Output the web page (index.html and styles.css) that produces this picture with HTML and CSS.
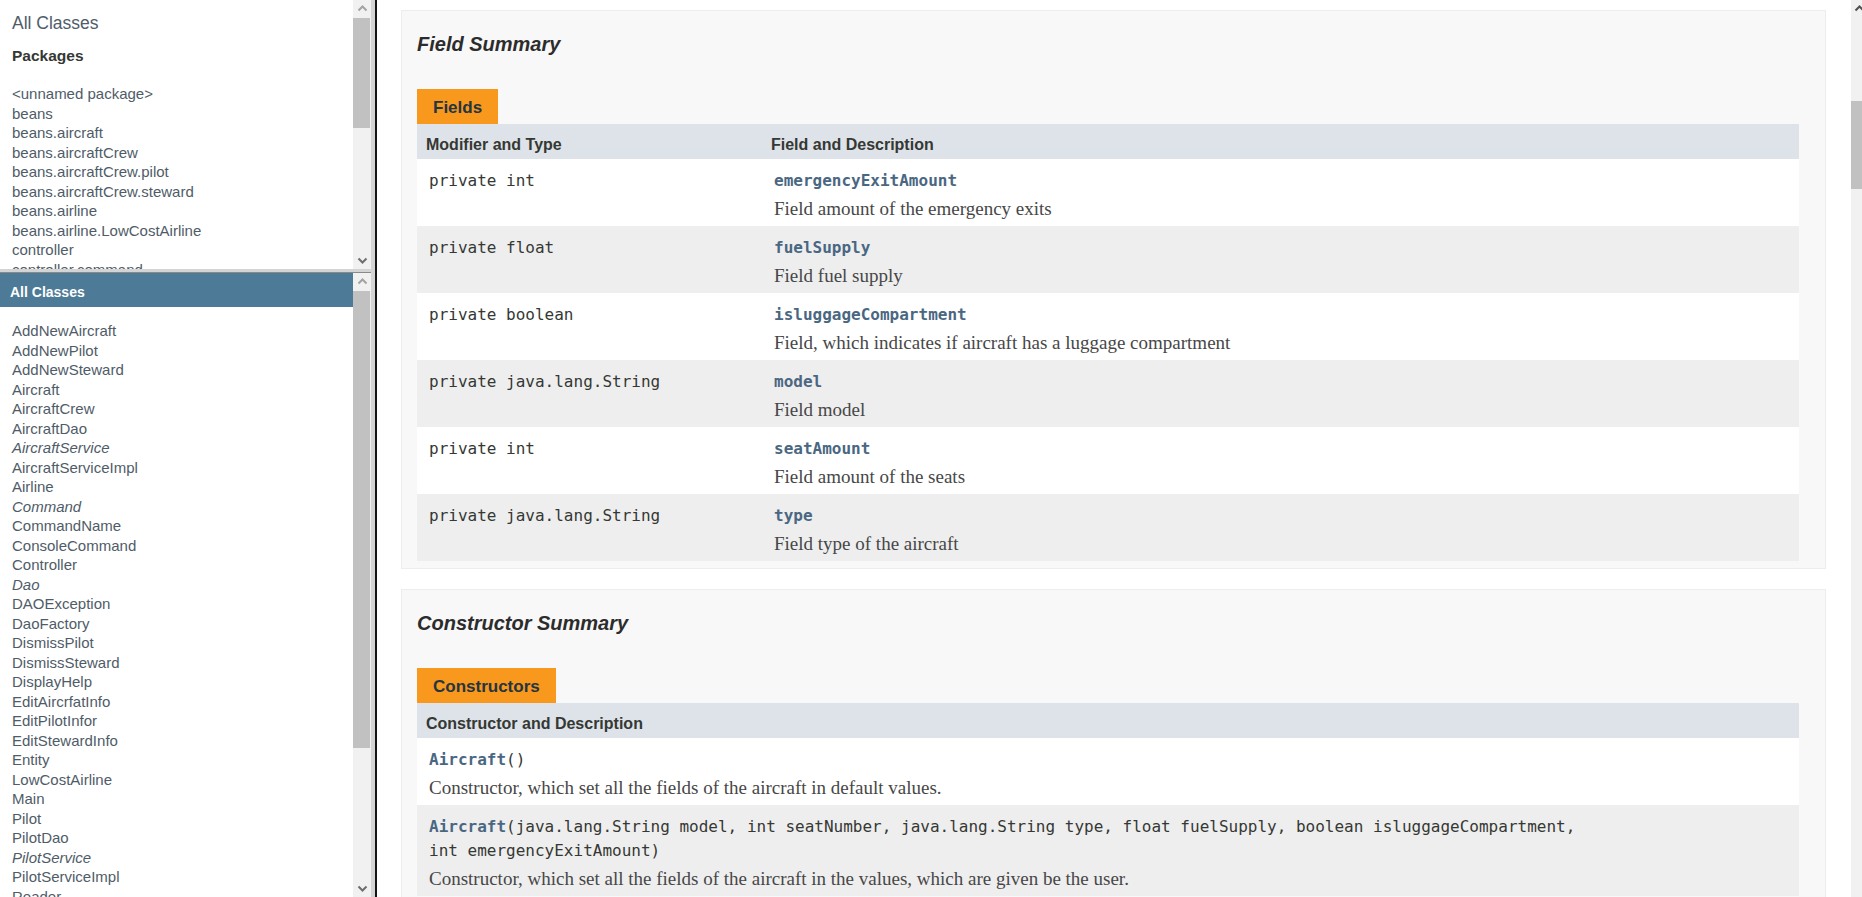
FILE: index.html
```html
<!DOCTYPE html>
<html>
<head>
<meta charset="utf-8">
<title>Aircraft</title>
<link rel="stylesheet" href="styles.css">
</head>
<body>
<div class="frameset">
  <div class="nav">
    <div class="pane pane-top">
      <div class="pane-body pkg-body">
        <div class="index-header"><a href="#">All Classes</a></div>
        <h2 class="pkg-title">Packages</h2>
        <ul class="index-list pkg-list">
          <li><a href="#">&lt;unnamed package&gt;</a></li>
          <li><a href="#">beans</a></li>
          <li><a href="#">beans.aircraft</a></li>
          <li><a href="#">beans.aircraftCrew</a></li>
          <li><a href="#">beans.aircraftCrew.pilot</a></li>
          <li><a href="#">beans.aircraftCrew.steward</a></li>
          <li><a href="#">beans.airline</a></li>
          <li><a href="#">beans.airline.LowCostAirline</a></li>
          <li><a href="#">controller</a></li>
          <li><a href="#">controller.command</a></li>
        </ul>
      </div>
      <div class="sb sb-top">
        <div class="sb-arrow"><svg width="17" height="17" viewBox="0 0 17 17"><polyline class="chev-off" points="4.5,10.5 8.5,6.5 12.5,10.5"/></svg></div>
        <div class="sb-track"><div class="sb-thumb"></div></div>
        <div class="sb-arrow"><svg width="17" height="17" viewBox="0 0 17 17"><polyline class="chev-on" points="4.5,6.5 8.5,10.5 12.5,6.5"/></svg></div>
      </div>
    </div>
    <div class="hdiv"></div>
    <div class="pane pane-bottom">
      <div class="pane-body">
        <h1 class="bar">All Classes</h1>
        <ul class="index-list class-list">
          <li><a href="#">AddNewAircraft</a></li>
          <li><a href="#">AddNewPilot</a></li>
          <li><a href="#">AddNewSteward</a></li>
          <li><a href="#">Aircraft</a></li>
          <li><a href="#">AircraftCrew</a></li>
          <li><a href="#">AircraftDao</a></li>
          <li><a href="#" class="iface">AircraftService</a></li>
          <li><a href="#">AircraftServiceImpl</a></li>
          <li><a href="#">Airline</a></li>
          <li><a href="#" class="iface">Command</a></li>
          <li><a href="#">CommandName</a></li>
          <li><a href="#">ConsoleCommand</a></li>
          <li><a href="#">Controller</a></li>
          <li><a href="#" class="iface">Dao</a></li>
          <li><a href="#">DAOException</a></li>
          <li><a href="#">DaoFactory</a></li>
          <li><a href="#">DismissPilot</a></li>
          <li><a href="#">DismissSteward</a></li>
          <li><a href="#">DisplayHelp</a></li>
          <li><a href="#">EditAircrfatInfo</a></li>
          <li><a href="#">EditPilotInfor</a></li>
          <li><a href="#">EditStewardInfo</a></li>
          <li><a href="#">Entity</a></li>
          <li><a href="#">LowCostAirline</a></li>
          <li><a href="#">Main</a></li>
          <li><a href="#">Pilot</a></li>
          <li><a href="#">PilotDao</a></li>
          <li><a href="#" class="iface">PilotService</a></li>
          <li><a href="#">PilotServiceImpl</a></li>
          <li><a href="#">Reader</a></li>
          <li><a href="#">Steward</a></li>
        </ul>
      </div>
      <div class="sb sb-bottom">
        <div class="sb-arrow"><svg width="17" height="17" viewBox="0 0 17 17"><polyline class="chev-off" points="4.5,10.5 8.5,6.5 12.5,10.5"/></svg></div>
        <div class="sb-track"><div class="sb-thumb"></div></div>
        <div class="sb-arrow"><svg width="17" height="17" viewBox="0 0 17 17"><polyline class="chev-on" points="4.5,6.5 8.5,10.5 12.5,6.5"/></svg></div>
      </div>
    </div>
  </div>
  <div class="vdiv"></div>
  <div class="main">
    <div class="content">
      <section class="summary">
        <h3 class="summary-title">Field Summary</h3>
        <div class="caption"><span>Fields</span></div>
        <table class="member-table">
          <tr>
            <th class="col-first">Modifier and Type</th>
            <th class="col-last">Field and Description</th>
          </tr>
          <tr class="row-white">
            <td class="col-first"><code class="line">private int</code></td>
            <td class="col-last"><code class="line"><a href="#" class="member">emergencyExitAmount</a></code><div class="block">Field amount of the emergency exits</div></td>
          </tr>
          <tr class="row-alt">
            <td class="col-first"><code class="line">private float</code></td>
            <td class="col-last"><code class="line"><a href="#" class="member">fuelSupply</a></code><div class="block">Field fuel supply</div></td>
          </tr>
          <tr class="row-white">
            <td class="col-first"><code class="line">private boolean</code></td>
            <td class="col-last"><code class="line"><a href="#" class="member">isluggageCompartment</a></code><div class="block">Field, which indicates if aircraft has a luggage compartment</div></td>
          </tr>
          <tr class="row-alt">
            <td class="col-first"><code class="line">private java.lang.String</code></td>
            <td class="col-last"><code class="line"><a href="#" class="member">model</a></code><div class="block">Field model</div></td>
          </tr>
          <tr class="row-white">
            <td class="col-first"><code class="line">private int</code></td>
            <td class="col-last"><code class="line"><a href="#" class="member">seatAmount</a></code><div class="block">Field amount of the seats</div></td>
          </tr>
          <tr class="row-alt">
            <td class="col-first"><code class="line">private java.lang.String</code></td>
            <td class="col-last"><code class="line"><a href="#" class="member">type</a></code><div class="block">Field type of the aircraft</div></td>
          </tr>
        </table>
      </section>
      <section class="summary">
        <h3 class="summary-title">Constructor Summary</h3>
        <div class="caption"><span>Constructors</span></div>
        <table class="member-table">
          <tr>
            <th class="col-one">Constructor and Description</th>
          </tr>
          <tr class="row-white">
            <td class="col-one"><code class="line"><a href="#" class="member">Aircraft</a>()</code><div class="block">Constructor, which set all the fields of the aircraft in default values.</div></td>
          </tr>
          <tr class="row-alt">
            <td class="col-one"><code class="line"><a href="#" class="member">Aircraft</a>(java.lang.String&nbsp;model, int&nbsp;seatNumber, java.lang.String&nbsp;type, float&nbsp;fuelSupply, boolean&nbsp;isluggageCompartment,<br>int&nbsp;emergencyExitAmount)</code><div class="block">Constructor, which set all the fields of the aircraft in the values, which are given be the user.</div></td>
          </tr>
        </table>
      </section>
    </div>
    <div class="sb sb-main">
      <div class="sb-arrow"><svg width="17" height="17" viewBox="0 0 17 17"><polyline class="chev-dark" points="4.5,10.5 8.5,6.5 12.5,10.5"/></svg></div>
      <div class="sb-track"><div class="sb-thumb"></div></div>
    </div>
  </div>
</div>
</body>
</html>
```

FILE: styles.css
```css
* { box-sizing: border-box; }

html, body {
  margin: 0;
  height: 100%;
}

body {
  overflow: hidden;
  background: #ffffff;
  color: #353833;
  font-family: "Liberation Sans", Arial, sans-serif;
}

a {
  color: #4a6782;
  text-decoration: none;
}

.frameset {
  display: flex;
  height: 897px;
}

/* ---------- navigation frames ---------- */
.nav {
  width: 371px;
  flex: none;
  display: flex;
  flex-direction: column;
}

.pane {
  display: flex;
  overflow: hidden;
}

.pane-top {
  height: 269px;
  flex: none;
}

.pane-bottom {
  flex: 1;
  min-height: 0;
}

.pane-body {
  flex: 1;
  min-width: 0;
  overflow: hidden;
  background: #ffffff;
}

.pkg-body {
  padding: 13px 0 0 12px;
}

.index-header {
  font-size: 17.5px;
  line-height: 20px;
}

.index-header a {
  color: #4f5d6b;
}

.pkg-title {
  margin: 14px 0 0;
  font-size: 15.5px;
  line-height: 18px;
  font-weight: bold;
  color: #353833;
}

.index-list {
  list-style: none;
  margin: 0;
  padding: 0;
  font-size: 15px;
  line-height: 19.5px;
  white-space: nowrap;
}

.index-list a {
  color: #4f5c68;
}

.pkg-list {
  margin-top: 19px;
}

.class-list {
  padding: 14px 0 0 12px;
}

.iface {
  font-style: italic;
}

.bar {
  margin: 0;
  background: #4d7a97;
  color: #ffffff;
  font-size: 14px;
  font-weight: bold;
  line-height: 16px;
  padding: 11px 0 7px 10px;
}

.hdiv {
  height: 4px;
  flex: none;
  background: #d4d4d4;
  border-bottom: 1px solid #8a8a8a;
}

.vdiv {
  width: 6px;
  flex: none;
  background: #d4d4d4;
  border-right: 2px solid #141414;
}

/* ---------- fake scrollbars ---------- */
.sb {
  width: 18px;
  flex: none;
  background: #f1f1f1;
  display: flex;
  flex-direction: column;
}

.sb-arrow {
  height: 17px;
  flex: none;
  display: flex;
  align-items: center;
  justify-content: center;
}

.sb-arrow svg polyline {
  fill: none;
  stroke-width: 2;
}

.chev-off { stroke: #a3a3a3; }
.chev-on { stroke: #6e6e6e; }
.chev-dark { stroke: #505050; }

.sb-track {
  flex: 1;
  position: relative;
}

.sb-thumb {
  position: absolute;
  left: 0;
  right: 1px;
  background: #c1c1c1;
}

.sb-top .sb-thumb { top: 1px; height: 110px; }
.sb-bottom .sb-thumb { top: 1px; height: 457px; }

.sb-main {
  width: 11px;
  overflow: hidden;
}

.sb-main .sb-arrow {
  justify-content: flex-start;
}

.sb-main .sb-arrow svg {
  flex: none;
}

.sb-main .sb-thumb {
  top: 84px;
  height: 88px;
  right: 0;
}

/* ---------- main frame ---------- */
.main {
  flex: 1;
  min-width: 0;
  display: flex;
}

.content {
  flex: 1;
  min-width: 0;
  overflow: hidden;
  padding: 10px 25px 0 24px;
}

.summary {
  border: 1px solid #ededed;
  background: #f8f8f8;
  padding: 0 26px 7px 15px;
  margin-bottom: 20px;
}

.summary-title {
  margin: 21px 0 0;
  font-size: 20px;
  line-height: 24px;
  font-style: italic;
  font-weight: bold;
  color: #2c2c2c;
}

.caption {
  display: flex;
  margin-top: 33px;
}

.caption span {
  background: #f8981d;
  color: #253441;
  font-size: 17px;
  font-weight: bold;
  line-height: 20px;
  padding: 9px 16px 6px;
  white-space: nowrap;
}

.member-table {
  width: 100%;
  border-collapse: collapse;
}

.member-table th {
  background: #dee3e9;
  color: #353833;
  font-size: 16px;
  font-weight: bold;
  line-height: 20px;
  text-align: left;
  padding: 11px 3px 4px 9px;
}

.member-table td {
  vertical-align: top;
  padding: 10px 0 5px 12px;
}

.member-table .col-first {
  width: 345px;
  white-space: nowrap;
}

.row-white { background: #ffffff; }
.row-alt { background: #eeeeef; }

.line {
  display: block;
  font-family: "DejaVu Sans Mono", "Liberation Mono", monospace;
  font-size: 16px;
  line-height: 24px;
  color: #353833;
}

.member {
  font-weight: bold;
  color: #4a6782;
}

.block {
  margin-top: 4px;
  font-family: "Liberation Serif", "Times New Roman", serif;
  font-size: 19px;
  line-height: 24px;
  color: #474747;
}
```
